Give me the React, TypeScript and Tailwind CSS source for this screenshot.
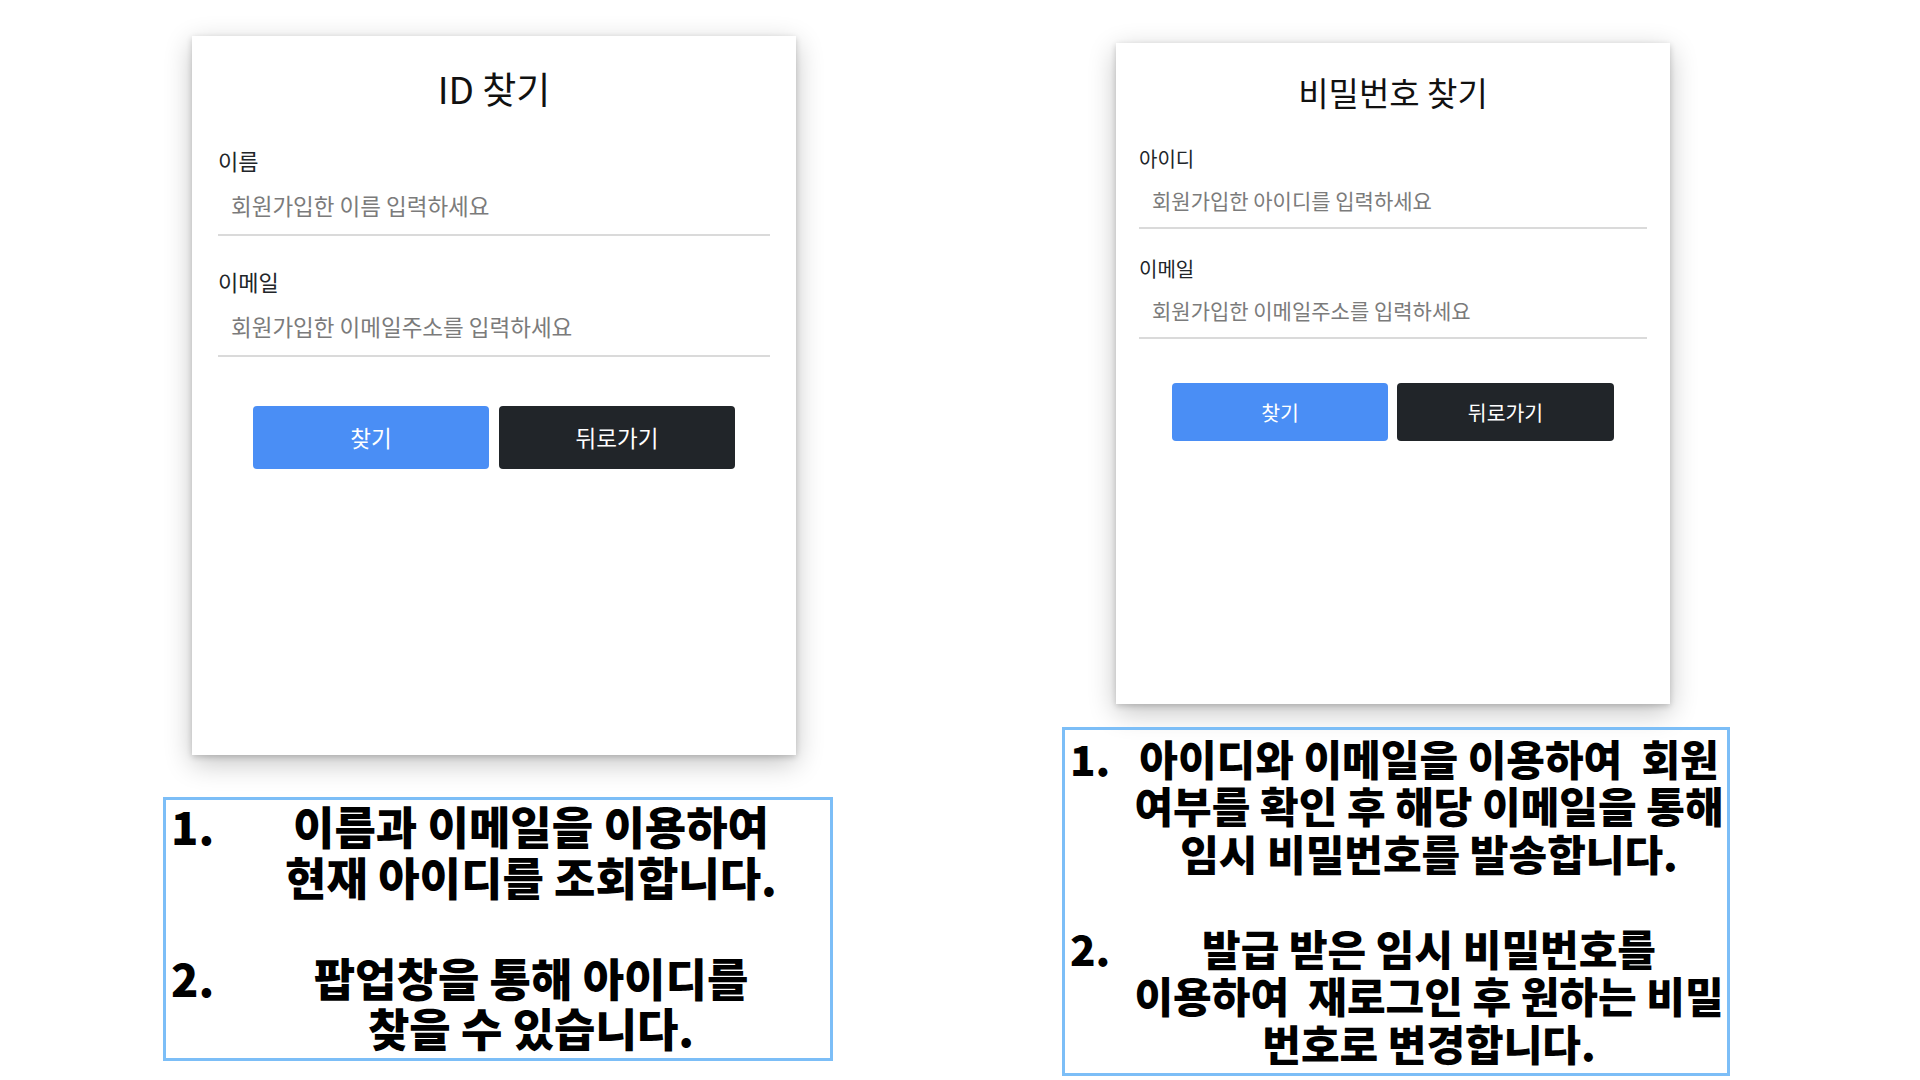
import React from "react";

type CardProps = {
  title: string;
  fields: { label: string; placeholder: string }[];
  big: boolean;
};

function FindCard({ title, fields, big }: CardProps) {
  if (big) {
    return (
      <div className="ml-[29px] w-[604px] h-[719px] bg-white shadow-[0_2px_6px_rgba(0,0,0,0.18),0_8px_26px_rgba(0,0,0,0.24)] px-[26px] pt-[32px]">
        <h2 className="text-center text-[37px] leading-[40px] text-[#111] font-normal">{title}</h2>
        <div className="mt-[38px]">
          {fields.map((f, i) => (
            <div key={i} className={i === 0 ? "" : "mt-[31px]"}>
              <div className="text-[22px] leading-[28px] text-[#212529]">{f.label}</div>
              <div className="mt-[4px] h-[58px] flex items-center border-b-2 border-[#dadada] pl-[13px]">
                <input
                  readOnly
                  placeholder={f.placeholder}
                  className="w-full bg-transparent outline-none text-[22.5px] text-[#333] placeholder:text-[#7b7b7b]"
                />
              </div>
            </div>
          ))}
        </div>
        <div className="mt-[49px] flex justify-center gap-[10px]">
          <button className="w-[236px] h-[63px] rounded-[4px] bg-[#4a8ef5] text-white text-[22.5px]">찾기</button>
          <button className="w-[236px] h-[63px] rounded-[4px] bg-[#212529] text-white text-[22.5px]">뒤로가기</button>
        </div>
      </div>
    );
  }
  return (
    <div className="ml-[54px] w-[554px] h-[661px] bg-white shadow-[0_2px_6px_rgba(0,0,0,0.18),0_8px_26px_rgba(0,0,0,0.24)] px-[23px] pt-[31px]">
      <h2 className="text-center text-[33px] leading-[36px] text-[#111] font-normal">{title}</h2>
      <div className="mt-[36px]">
        {fields.map((f, i) => (
          <div key={i} className={i === 0 ? "" : "mt-[27px]"}>
            <div className="text-[20px] leading-[26px] text-[#212529]">{f.label}</div>
            <div className="mt-[2px] h-[55px] flex items-center border-b-2 border-[#dadada] pl-[13px]">
              <input
                readOnly
                placeholder={f.placeholder}
                className="w-full bg-transparent outline-none text-[21px] text-[#333] placeholder:text-[#7b7b7b]"
              />
            </div>
          </div>
        ))}
      </div>
      <div className="mt-[44px] flex justify-center gap-[9px]">
        <button className="w-[216px] h-[58px] rounded-[4px] bg-[#4a8ef5] text-white text-[20.5px]">찾기</button>
        <button className="w-[217px] h-[58px] rounded-[4px] bg-[#212529] text-white text-[20.5px]">뒤로가기</button>
      </div>
    </div>
  );
}

function Item({ num, lines }: { num: string; lines: string[] }) {
  return (
    <div className="flex">
      <div className="w-[66px] pl-[5px] shrink-0">{num}</div>
      <div className="flex-1 text-center">
        {lines.map((l, i) => (
          <div key={i} className="whitespace-pre">{l}</div>
        ))}
      </div>
    </div>
  );
}

export default function App() {
  return (
    <div className="min-h-[1080px] w-[1920px] bg-white flex items-start [font-family:'Noto_Sans_CJK_KR','Noto_Sans',sans-serif] text-black">
      {/* left column */}
      <div className="ml-[163px] w-[670px] pt-[36px] flex flex-col">
        <FindCard
          big
          title="ID 찾기"
          fields={[
            { label: "이름", placeholder: "회원가입한 이름 입력하세요" },
            { label: "이메일", placeholder: "회원가입한 이메일주소를 입력하세요" },
          ]}
        />
        <div className="mt-[42px] border-[3px] border-[#7cbef7] pt-[1px] pb-[4px] text-[45px] leading-[50.5px] font-black">
          <Item num="1." lines={["이름과 이메일을 이용하여", "현재 아이디를 조회합니다."]} />
          <div className="h-[50.5px]" />
          <Item num="2." lines={["팝업창을 통해 아이디를", "찾을 수 있습니다."]} />
        </div>
      </div>
      {/* right column */}
      <div className="ml-[229px] w-[668px] pt-[43px] flex flex-col">
        <FindCard
          big={false}
          title="비밀번호 찾기"
          fields={[
            { label: "아이디", placeholder: "회원가입한 아이디를 입력하세요" },
            { label: "이메일", placeholder: "회원가입한 이메일주소를 입력하세요" },
          ]}
        />
        <div className="mt-[23px] border-[3px] border-[#7cbef7] pt-[3.5px] pb-[7px] text-[42px] leading-[47.5px] font-black">
          <Item
            num="1."
            lines={["아이디와 이메일을 이용하여  회원", "여부를 확인 후 해당 이메일을 통해", "임시 비밀번호를 발송합니다."]}
          />
          <div className="h-[47.5px]" />
          <Item
            num="2."
            lines={["발급 받은 임시 비밀번호를", "이용하여  재로그인 후 원하는 비밀", "번호로 변경합니다."]}
          />
        </div>
      </div>
    </div>
  );
}
